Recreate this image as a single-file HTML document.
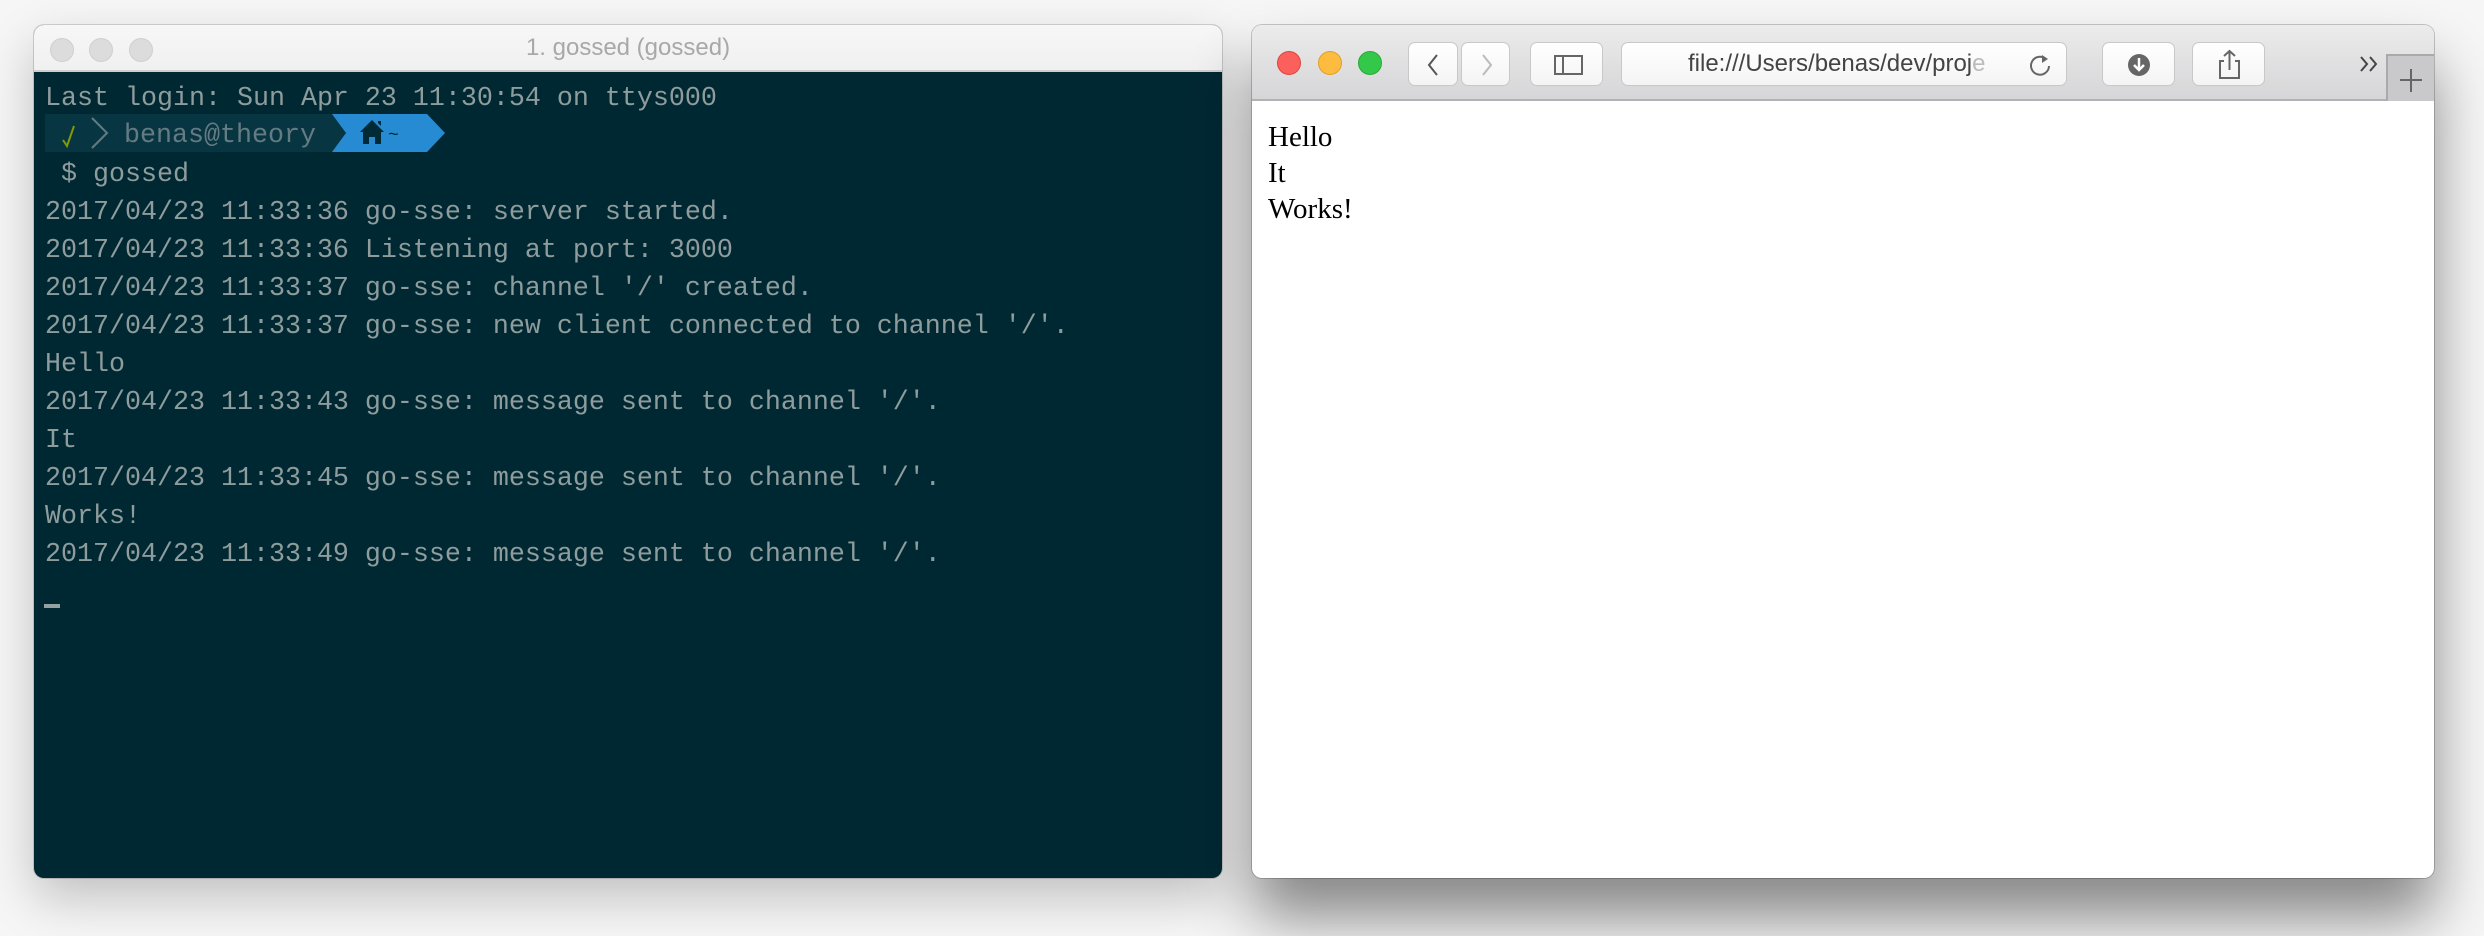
<!DOCTYPE html>
<html><head><meta charset="utf-8"><style>
html,body{margin:0;padding:0;width:2484px;height:936px;overflow:hidden;background:#f6f6f6;}
.term{position:absolute;left:34px;top:25px;width:1188px;height:853px;border-radius:10px;overflow:hidden;background:#002833;box-shadow:0 20px 50px rgba(0,0,0,0.22),0 0 0 1px rgba(0,0,0,0.15);}
.ttitle{position:absolute;left:0;top:0;width:100%;height:45px;background:linear-gradient(#f7f7f7,#f0f0f0);border-bottom:2px solid #cfcfcf;text-align:center;font:24px "Liberation Sans",sans-serif;color:#a8a8a8;line-height:46px;}
.gl{position:absolute;top:13px;width:24px;height:24px;border-radius:50%;background:#dcdcdc;border:1px solid #cfcfcf;box-sizing:border-box;}
.lines{position:absolute;left:11px;top:55px;font:26.67px/38px "Liberation Mono",monospace;color:#8f9c9c;white-space:pre;}
.prompt{position:absolute;left:11px;top:89px;height:38px;}
.brow{position:absolute;left:1252px;top:25px;width:1182px;height:853px;border-radius:10px;overflow:hidden;background:#fff;box-shadow:0 40px 60px rgba(0,0,0,0.45),0 0 0 1px rgba(0,0,0,0.2);}
.tb{position:absolute;left:0;top:0;width:100%;height:74px;background:linear-gradient(#ececec,#d6d5d7);border-bottom:2px solid #b2b2b2;}
.tl{position:absolute;top:26px;width:24px;height:24px;border-radius:50%;box-sizing:border-box;}
.btn{position:absolute;top:17px;height:44px;background:linear-gradient(#fff,#f4f4f4);border:1px solid #c8c8c8;border-radius:7px;box-sizing:border-box;}
.page{position:absolute;left:16px;top:94px;font:29px/36px "Liberation Serif",serif;color:#000;}
</style></head><body>
<div class="term">
  <div class="ttitle">1. gossed (gossed)
    <div class="gl" style="left:16px"></div><div class="gl" style="left:55px"></div><div class="gl" style="left:95px"></div>
  </div>
  <div class="lines">Last login: Sun Apr 23 11:30:54 on ttys000

 $ gossed
2017/04/23 11:33:36 go-sse: server started.
2017/04/23 11:33:36 Listening at port: 3000
2017/04/23 11:33:37 go-sse: channel '/' created.
2017/04/23 11:33:37 go-sse: new client connected to channel '/'.
Hello
2017/04/23 11:33:43 go-sse: message sent to channel '/'.
It
2017/04/23 11:33:45 go-sse: message sent to channel '/'.
Works!
2017/04/23 11:33:49 go-sse: message sent to channel '/'.</div>
  <svg class="prompt" width="420" height="38" viewBox="0 0 420 38">
    <rect x="0" y="0" width="300" height="38" fill="#073642"/>
    <polygon points="287,0 382,0 400,19 382,38 287,38 301,19" fill="#268bd2"/>
    <path d="M18 26 L22 32 L29 12" stroke="#859900" stroke-width="2" fill="none"/>
    <path d="M47 4 L62 19 L47 34" stroke="#657b83" stroke-width="2" fill="none"/>
    <text x="79" y="28" font-family="Liberation Mono,monospace" font-size="26.67" fill="#657b83">benas@theory</text>
    <path d="M315 18 L327 6 L339 18 L336 18 L336 30 L330 30 L330 23 L324 23 L324 30 L318 30 L318 18 Z M333 7 L336 7 L336 12 L333 9 Z" fill="#002b36"/>
    <text x="343" y="26" font-family="Liberation Mono,monospace" font-size="18" fill="#002b36">~</text>
  </svg>
  <div style="position:absolute;left:10px;top:579px;width:16px;height:4px;background:#93a1a1"></div>
</div>
<div class="brow">
  <div class="tb">
    <div class="tl" style="left:25px;background:#fc605c;border:1px solid #e0443e"></div>
    <div class="tl" style="left:66px;background:#fdbc40;border:1px solid #dea123"></div>
    <div class="tl" style="left:106px;background:#34c84a;border:1px solid #27aa35"></div>
    <div class="btn" style="left:156px;width:50px"><svg width="50" height="44"><path d="M28 12 L20 22 L28 32" stroke="#555" stroke-width="2" fill="none"/></svg></div>
    <div class="btn" style="left:209px;width:49px"><svg width="49" height="44"><path d="M21 12 L29 22 L21 32" stroke="#bbb" stroke-width="2" fill="none"/></svg></div>
    <div class="btn" style="left:278px;width:73px"><svg width="73" height="44"><rect x="24" y="13" width="27" height="18" stroke="#666" stroke-width="2" fill="none"/><line x1="32" y1="13" x2="32" y2="31" stroke="#666" stroke-width="2"/></svg></div>
    <div class="btn" style="left:369px;width:446px;font:24px/42px 'Liberation Sans',sans-serif;color:#444;">
      <span style="position:absolute;left:66px;">file:///Users/benas/dev/proj<span style="color:#bbb">e</span></span>
      <svg style="position:absolute;right:12px;top:9px" width="26" height="26"><path d="M18 7 A9 9 0 1 0 21 14" stroke="#666" stroke-width="2" fill="none"/><path d="M14 3 L20 7 L14 11 Z" fill="#666"/></svg>
    </div>
    <div class="btn" style="left:850px;width:73px"><svg width="73" height="44"><circle cx="36" cy="22" r="11" fill="#666"/><path d="M36 15 L36 27 M31 22 L36 27 L41 22" stroke="#fff" stroke-width="2.5" fill="none"/></svg></div>
    <div class="btn" style="left:940px;width:73px"><svg width="73" height="44"><path d="M31 18 L27 18 L27 35 L46 35 L46 18 L42 18" stroke="#666" stroke-width="2" fill="none"/><path d="M36.5 27 L36.5 8 M31 13 L36.5 8 L42 13" stroke="#666" stroke-width="2" fill="none"/></svg></div>
    <svg style="position:absolute;left:1104px;top:28px" width="26" height="22"><path d="M5 4 L11 11 L5 18 M14 4 L20 11 L14 18" stroke="#444" stroke-width="2" fill="none"/></svg>
    <div style="position:absolute;left:1134px;top:29px;width:48px;height:47px;background:#c9c9cb;border-left:2px solid #aaa;border-top:2px solid #aaa;box-sizing:border-box"><svg width="46" height="45"><path d="M23 13 L23 36 M12 24 L34 24" stroke="#666" stroke-width="2"/></svg></div>
  </div>
  <div class="page">Hello<br>It<br>Works!</div>
</div>
</body></html>
